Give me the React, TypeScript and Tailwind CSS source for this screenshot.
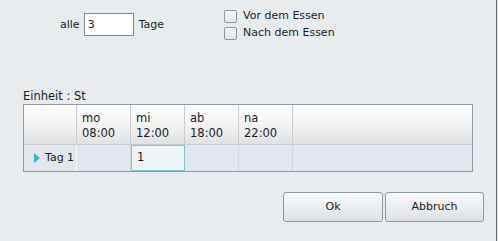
import { useState } from "react";

const font = { fontFamily: '"DejaVu Sans", Verdana, sans-serif' };

function CheckBox({ label }: { label: string }) {
  return (
    <label className="flex items-center h-[17px] gap-[6px]">
      <span className="w-[13px] h-[13px] border border-[#8b96a2] rounded-[2px] bg-gradient-to-b from-[#f4f6f8] to-[#e3e7ec]" />
      <span className="text-[11px] text-[#1b1b1b]">{label}</span>
    </label>
  );
}

const slots = [
  { day: "mo", time: "08:00" },
  { day: "mi", time: "12:00" },
  { day: "ab", time: "18:00" },
  { day: "na", time: "22:00" },
];

export default function App() {
  const [days, setDays] = useState("3");

  return (
    <div className="flex w-[498px] h-[241px] bg-[#e9ecef] text-[#1b1b1b]" style={font}>
      <div className="flex-1 flex flex-col">
        {/* top options */}
        <div className="flex pt-[8px] h-[89px]">
          <div className="w-[224px] flex items-center gap-[4px] pl-[60px] h-[23px] mt-[5px] text-[11px]">
            <span className="mt-[2px]">alle</span>
            <input
              value={days}
              onChange={(e) => setDays(e.target.value)}
              className="w-[50px] h-[23px] border border-[#7f8a96] bg-white px-[3px] text-[11px] outline-none"
              style={font}
            />
            <span className="ml-[1px] mt-[2px]">Tage</span>
          </div>
          <div className="flex flex-col">
            <CheckBox label="Vor dem Essen" />
            <CheckBox label="Nach dem Essen" />
          </div>
        </div>

        {/* grid */}
        <div className="pl-[23px]">
          <div className="text-[11.5px] h-[15px] leading-[15px]">Einheit : St</div>
          <div className="w-[450px] border border-[#8e99a4] bg-[#e2e6ee] text-[11.5px]">
            <div className="flex h-[40px] border-b border-[#c9ccd0] bg-gradient-to-b from-[#fdfdfd] via-[#f4f4f4] to-[#e0e1e3]">
              <div className="w-[53px] border-r border-[#c9ccd0]" />
              {slots.map((s) => (
                <div key={s.day} className="w-[54px] border-r border-[#c9ccd0] pl-[5px] pt-[6px] leading-[15px]">
                  <div>{s.day}</div>
                  <div>{s.time}</div>
                </div>
              ))}
              <div className="flex-1" />
            </div>
            <div className="flex h-[26px]">
              <div className="w-[53px] shrink-0 border-r border-[#f6f8fa] flex items-center pl-[10px] gap-[5px] text-[11px]">
                <svg width="6" height="10" viewBox="0 0 6 10" className="shrink-0">
                  <path d="M0 0 L6 5 L0 10 Z" fill="#3ab0e0" />
                </svg>
                <span className="whitespace-nowrap">Tag 1</span>
              </div>
              <div className="w-[54px] shrink-0 border-r border-[#d2d6dc]" />
              <div className="w-[54px] shrink-0 border border-[#7ec6d2] bg-[#eef3f5] flex items-center pl-[5px]">1</div>
              <div className="w-[54px] shrink-0 border-r border-[#d2d6dc]" />
              <div className="w-[54px] shrink-0 border-r border-[#d2d6dc]" />
              <div className="flex-1" />
            </div>
          </div>
        </div>

        {/* buttons */}
        <div className="flex justify-end gap-[2px] pr-[12px] mt-[20px]">
          <button className="w-[100px] h-[30px] border border-[#8b98a6] rounded-[3px] bg-gradient-to-b from-[#fbfbfc] to-[#dde0e4] text-[11px]" style={font}>
            Ok
          </button>
          <button className="w-[99px] h-[30px] border border-[#8b98a6] rounded-[3px] bg-gradient-to-b from-[#fbfbfc] to-[#dde0e4] text-[11px]" style={font}>
            Abbruch
          </button>
        </div>
      </div>
      <div className="w-[1px] bg-[#5e6873]" />
      <div className="w-[1px] bg-[#dfe3e7]" />
    </div>
  );
}
